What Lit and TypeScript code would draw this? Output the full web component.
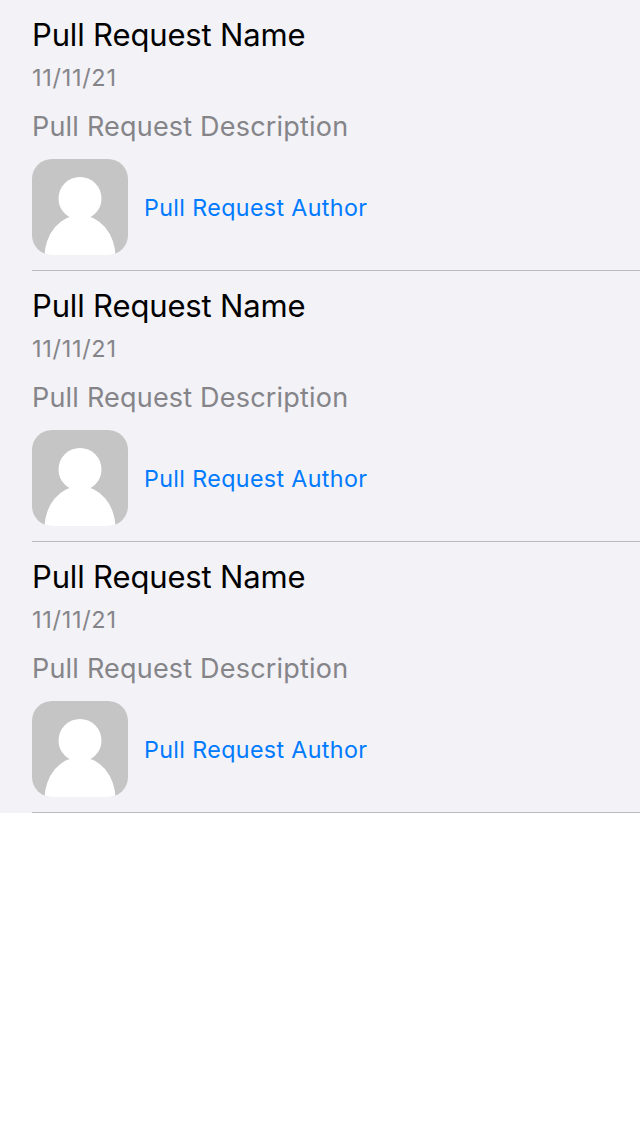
import { LitElement, html, css } from "lit";
import { customElement, property } from "lit/decorators.js";

@customElement("pull-request-row")
class PullRequestRow extends LitElement {
  @property() name = "";
  @property() date = "";
  @property() description = "";
  @property() author = "";

  static styles = css`
    :host { display: block; height: 271px; box-sizing: border-box; padding-left: 32px; background: #f2f2f7; }
    .content { height: 271px; box-sizing: border-box; border-bottom: 1px solid #bababf; padding-top: 15px; }
    .name, .date, .description, .author { white-space: nowrap; }
    .name { height: 40px; line-height: 39px; font-size: 31px; color: #000; letter-spacing: -0.15px; }
    .date { height: 32px; margin-top: 6px; line-height: 34px; font-size: 23.5px; color: #858589; letter-spacing: 0.7px; }
    .description { height: 34px; margin-top: 16px; line-height: 35px; font-size: 27px; color: #858589; letter-spacing: 0.2px; }
    .person { display: flex; align-items: center; gap: 16px; margin-top: 16px; height: 96px; }
    .avatar { width: 96px; height: 96px; display: block; border-radius: 20px; }
    .author { font-size: 23.25px; line-height: 30px; padding-top: 2px; color: #007aff; letter-spacing: 0.37px; }
  `;

  render() {
    return html`
      <div class="content">
        <div class="name"><span>${this.name}</span></div>
        <div class="date"><span>${this.date}</span></div>
        <div class="description"><span>${this.description}</span></div>
        <div class="person">
          <svg class="avatar" viewBox="0 0 96 96">
            <rect width="96" height="96" fill="#c5c5c5" />
            <circle cx="48" cy="39.400" r="21.500" fill="#fff" />
            <ellipse cx="48" cy="98" rx="35.500" ry="42" fill="#fff" />
          </svg>
          <span class="author">${this.author}</span>
        </div>
      </div>
    `;
  }
}

@customElement("app-root")
class AppRoot extends LitElement {
  static styles = css`
    :host { display: block; min-height: 100vh; background: #fff; font-family: Inter, sans-serif; }
  `;

  render() {
    return [0, 1, 2].map(
      () => html`<pull-request-row
        name="Pull Request Name"
        date="11/11/21"
        description="Pull Request Description"
        author="Pull Request Author"
      ></pull-request-row>`
    );
  }
}
